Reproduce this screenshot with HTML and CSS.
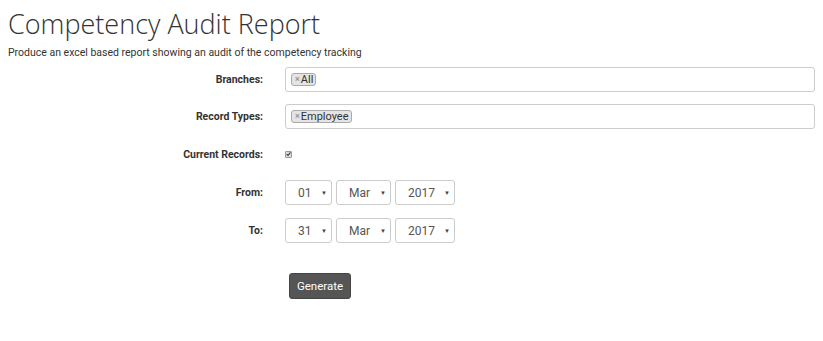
FILE: index.html
```html
<!DOCTYPE html>
<html>
<head>
<meta charset="utf-8">
<link rel="stylesheet" href="styles.css">
</head>
<body>
<div class="page">
  <h1 class="title">Competency Audit Report</h1>
  <p class="intro">Produce an excel based report showing an audit of the competency tracking</p>
  <form class="form">
    <div class="row">
      <label class="lbl">Branches:</label>
      <div class="ctl">
        <div class="multi"><span class="tag"><span class="x">×</span>All</span></div>
      </div>
    </div>
    <div class="row">
      <label class="lbl">Record Types:</label>
      <div class="ctl">
        <div class="multi"><span class="tag"><span class="x">×</span>Employee</span></div>
      </div>
    </div>
    <div class="row row-check">
      <label class="lbl">Current Records:</label>
      <div class="ctl">
        <span class="check"><svg width="6" height="6" viewBox="0 0 6 6"><path d="M0.8 3.2 L2.4 4.8 L5.3 1" fill="none" stroke="#333" stroke-width="1.3"/></svg></span>
      </div>
    </div>
    <div class="row row-date">
      <label class="lbl">From:</label>
      <div class="ctl dates">
        <div class="sel s-day"><span>01</span><i>▼</i></div>
        <div class="sel s-mon"><span>Mar</span><i>▼</i></div>
        <div class="sel s-year"><span>2017</span><i>▼</i></div>
      </div>
    </div>
    <div class="row row-date">
      <label class="lbl">To:</label>
      <div class="ctl dates">
        <div class="sel s-day"><span>31</span><i>▼</i></div>
        <div class="sel s-mon"><span>Mar</span><i>▼</i></div>
        <div class="sel s-year"><span>2017</span><i>▼</i></div>
      </div>
    </div>
    <div class="row row-btn">
      <div class="lbl"></div>
      <div class="ctl"><button type="button" class="btn">Generate</button></div>
    </div>
  </form>
</div>
</body>
</html>
```
FILE: styles.css
```css
* { box-sizing: border-box; }
html, body { margin: 0; padding: 0; background: #fff; }
body { font-family: Roboto, "Liberation Sans", sans-serif; color: #333; font-size: 11px; }
.page { padding: 0 8px; }
.title {
  font-family: "Open Sans", "DejaVu Sans", sans-serif;
  font-weight: 300;
  font-size: 27px;
  line-height: 38px;
  margin: 5px 0 0;
  color: #333;
}
.intro { margin: 3px 0 0; font-size: 10.5px; line-height: 14px; color: #333; }
.form { margin-top: 7px; width: 807px; }
.row { display: flex; align-items: center; margin-bottom: 12px; }
.lbl {
  width: 255px; flex: none; text-align: right; font-weight: 700;
  font-size: 10.5px; color: #333;
}
.ctl { flex: 1; padding-left: 22px; display: flex; align-items: center; }
.multi {
  width: 530px; height: 25px; border: 1px solid #ccc; border-radius: 3px;
  padding: 5px 5px; display: flex; align-items: center;
}
.tag {
  display: inline-flex; align-items: center; height: 13px;
  background: #e4e4e4; border: 1px solid #aaa; border-radius: 3px;
  padding: 0 2px 0 3px; font-size: 11px; color: #333; line-height: 11px;
}
.tag .x { color: #999; font-weight: 700; font-size: 9px; margin-right: 1px; }
.row-check { height: 8px; margin-top: 21px; margin-bottom: 22px; }
.check {
  display: inline-flex; align-items: center; justify-content: center;
  width: 7px; height: 7px; background: #ddd; border: 1px solid #999; border-radius: 1px;
}
.dates { gap: 4px; }
.sel {
  height: 25px; border: 1px solid #ccc; border-radius: 3px;
  display: flex; align-items: center; justify-content: space-between;
  padding: 0 4px 0 12px; color: #555; font-size: 12px;
}
.sel i { font-style: normal; font-size: 6px; color: #444; }
.s-day { width: 47px; }
.s-mon { width: 55px; }
.s-year { width: 60px; }
.row-date { margin-bottom: 13px; }
.row-btn { margin-top: 30px; }
.btn {
  margin-left: 4px; width: 62px; height: 26px; background: #555; color: #fff;
  border: 1px solid #444; border-radius: 3px; font-family: Roboto, "Liberation Sans", sans-serif;
  font-size: 11.5px; padding: 0;
}
```
